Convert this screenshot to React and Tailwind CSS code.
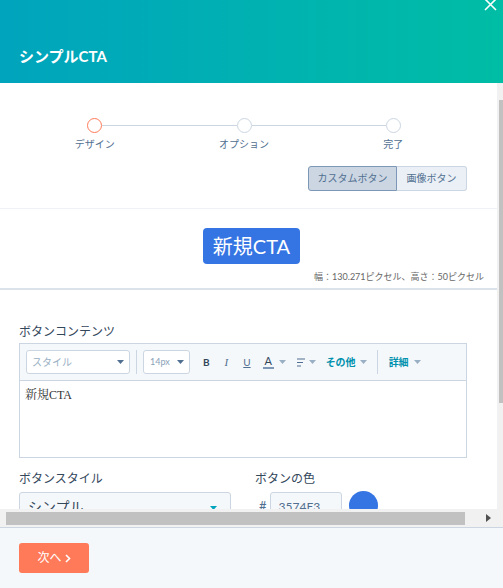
import React from "react"

const Caret = ({ className = "" }) => (
  <svg width="7" height="4" viewBox="0 0 7 4" className={className}>
    <path d="M0 0h7L3.5 4z" fill="currentColor" />
  </svg>
)

function Step({ label, active, first, last }) {
  return (
    <div className="flex-1 flex flex-col items-center">
      <div className="w-full flex items-center">
        <div className={`flex-1 h-px ${first ? "" : "bg-[#cbd6e2]"}`} />
        <div className={`w-[15px] h-[15px] rounded-full border-[1.5px] bg-white ${active ? "border-[#ff7a59]" : "border-[#cbd6e2]"}`} />
        <div className={`flex-1 h-px ${last ? "" : "bg-[#cbd6e2]"}`} />
      </div>
      <div className="mt-[4px] text-[10px] leading-[14px] text-[#516f90]">{label}</div>
    </div>
  )
}

function Toolbar() {
  return (
    <div className="h-[37px] bg-[#f5f8fa] border-b border-[#cbd6e2] flex items-center pl-[6px] text-[#33475b]">
      <div className="w-[104px] h-[24px] bg-white border border-[#cbd6e2] rounded-[3px] flex items-center justify-between px-[5px] text-[10px] text-[#99afc4]">
        <span>スタイル</span>
        <Caret className="text-[#516f90]" />
      </div>
      <div className="w-px h-[24px] bg-[#cbd6e2] mx-[6px]" />
      <div className="w-[47px] h-[24px] bg-white border border-[#cbd6e2] rounded-[3px] flex items-center justify-between pl-[6px] pr-[5px] text-[9px] text-[#8aa0b8]">
        <span>14px</span>
        <Caret className="text-[#516f90]" />
      </div>
      <span className="ml-[13px] text-[10px] font-bold">B</span>
      <span className="ml-[15px] text-[11px] italic font-['Liberation_Serif',serif] text-[#516f90]">I</span>
      <span className="ml-[15px] text-[10px] underline text-[#516f90]">U</span>
      <span className="ml-[12px] flex flex-col items-center">
        <span className="text-[11px] leading-[12px] text-[#33475b]">A</span>
        <span className="w-[11px] h-[2px] bg-[#7c98b6]" />
      </span>
      <Caret className="ml-[5px] text-[#99afc4]" />
      <svg width="9" height="9" viewBox="0 0 9 9" className="ml-[11px]">
        <path d="M0 1h8M0 4.5h6M0 8h4" stroke="#516f90" strokeWidth="1.2" />
      </svg>
      <Caret className="ml-[3px] text-[#99afc4]" />
      <span className="ml-[10px] text-[10px] font-bold text-[#0091ae]">その他</span>
      <Caret className="ml-[4px] text-[#99afc4]" />
      <div className="w-px h-[24px] bg-[#cbd6e2] ml-[10px] mr-[11px]" />
      <span className="text-[10px] font-bold text-[#0091ae]">詳細</span>
      <Caret className="ml-[5px] text-[#99afc4]" />
    </div>
  )
}

export default function App() {
  return (
    <div className="w-[503px] h-[588px] flex flex-col overflow-hidden bg-white font-['Lato','Noto_Sans_CJK_JP',sans-serif] text-[#33475b]">
      <div className="relative h-[83px] shrink-0 bg-gradient-to-r from-[#00a4bd] to-[#00bda5] flex items-end pb-[17px] pl-[19px]">
        <h1 className="text-[15px] font-bold text-white leading-[20px]">シンプルCTA</h1>
        <svg width="13" height="13" viewBox="0 0 13 13" className="absolute top-[-2px] right-[6px]">
          <path d="M1 1l11 11M12 1L1 12" stroke="white" strokeWidth="1.6" />
        </svg>
      </div>

      <div className="flex-1 flex min-h-0">
        <div className="flex-1 flex flex-col min-w-0">
          <div className="flex-1 overflow-hidden">
            <div className="pt-[35px] px-[20px] pb-[17px] border-b border-[#eef1f5]">
              <div className="flex w-[448px]">
                <Step label="デザイン" active first />
                <Step label="オプション" />
                <Step label="完了" last />
              </div>
              <div className="mt-[15px] flex justify-end pr-[10px]">
                <div className="flex text-[10px]">
                  <button className="h-[25px] w-[89px] bg-[#cbd6e2] border border-[#7c98b6] rounded-l-[3px] text-[#516f90]">カスタムボタン</button>
                  <button className="h-[25px] w-[70px] bg-[#eaf0f6] border border-l-0 border-[#cbd6e2] rounded-r-[3px] text-[#516f90]">画像ボタン</button>
                </div>
              </div>
            </div>

            <div className="pt-[19px] pb-[5px] border-b-2 border-[#dbe2ea]">
              <div className="flex justify-center pl-[6px]">
                <div className="w-[97px] h-[36px] rounded-[4px] bg-[#3574E3] text-white text-[20px] flex items-center justify-center">新規CTA</div>
              </div>
              <div className="mt-[7px] pr-[13px] text-right text-[9px] leading-[12px] text-[#666]">幅：130.271ピクセル、高さ：50ピクセル</div>
            </div>

            <div className="pt-[34px] px-[19px]">
              <div className="text-[12px] leading-[16px] text-[#33475b]">ボタンコンテンツ</div>
              <div className="mt-[3px] w-[448px] border border-[#cbd6e2]">
                <Toolbar />
                <div className="h-[76px] px-[5px] pt-[5px] font-['Liberation_Serif','Noto_Serif_CJK_JP',serif] text-[12px] text-[#333]">新規CTA</div>
              </div>
              <div className="mt-[13px] flex">
                <div className="w-[236px]">
                  <div className="text-[12px] leading-[16px]">ボタンスタイル</div>
                  <div className="mt-[5px] w-[212px] h-[34px] bg-[#f5f8fa] border border-[#cbd6e2] rounded-[3px] flex items-start justify-between pl-[8px] pr-[13px] pt-[4px]">
                    <span className="text-[14px] leading-[20px]">シンプル</span>
                    <Caret className="mt-[9px] text-[#00a4bd]" />
                  </div>
                </div>
                <div>
                  <div className="text-[12px] leading-[16px]">ボタンの色</div>
                  <div className="mt-[4px] flex items-start">
                    <span className="mt-[6px] ml-[4px] text-[13px] leading-[18px] text-[#516f90]">#</span>
                    <div className="ml-[3px] mt-[1px] w-[72px] h-[34px] bg-[#f5f8fa] border border-[#cbd6e2] rounded-[3px] pl-[8px] pt-[6px] text-[12px] leading-[16px] text-[#516f90]">3574E3</div>
                    <div className="ml-[7px] w-[29px] h-[29px] rounded-full bg-[#3574E3]" />
                  </div>
                </div>
              </div>
            </div>
          </div>
          <div className="h-[18px] shrink-0 bg-[#f1f1f1] flex items-center">
            <div className="ml-[6px] w-[459px] h-[13px] bg-[#c1c1c1]" />
            <svg width="5" height="8" viewBox="0 0 5 8" className="ml-[21px]">
              <path d="M0 0l5 4-5 4z" fill="#505050" />
            </svg>
          </div>
        </div>
        <div className="w-[6px] shrink-0 bg-[#f1f1f1] pl-[2px]">
          <div className="h-[17px]" />
          <div className="h-[303px] bg-[#c1c1c1]" />
        </div>
      </div>

      <div className="h-[61px] shrink-0 bg-[#f5f8fa] border-t border-[#cbd6e2] pt-[15px] pl-[19px]">
        <button className="w-[70px] h-[30px] rounded-[3px] bg-[#ff7a59] text-white text-[12px] flex items-center justify-center gap-[3px]">
          <span>次へ</span>
          <svg width="6" height="9" viewBox="0 0 6 9"><path d="M1 1l3.5 3.5L1 8" stroke="white" strokeWidth="1.6" fill="none" /></svg>
        </button>
      </div>
    </div>
  )
}
